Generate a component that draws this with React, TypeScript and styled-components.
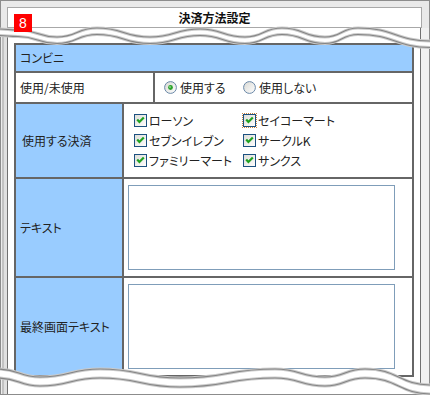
import React, { useId } from 'react'
import styled, { createGlobalStyle } from 'styled-components'

const GlobalStyle = createGlobalStyle`
  html, body {
    margin: 0;
    padding: 0;
    background: #fff;
  }
  body {
    font-family: 'Noto Sans CJK JP', 'Noto Sans', sans-serif;
    font-size: 12px;
    color: #222;
    font-feature-settings: 'palt';
  }
`

const Frame = styled.div`
  position: relative;
  width: 430px;
  height: 395px;
  box-sizing: border-box;
  border: 1px solid #8c8c8c;
  background: #e9e9e9;
  display: flex;
  flex-direction: column;
`

const TitleBar = styled.div`
  margin: 6px 7px 0 6px;
  height: 21px;
  box-sizing: border-box;
  border: 1px solid #a8a8a8;
  background: #fff;
  display: flex;
  align-items: center;
  justify-content: center;
  font-weight: bold;
  line-height: 1;
  color: #111;
`

const Badge = styled.div`
  position: absolute;
  left: 13px;
  top: 13px;
  width: 18px;
  height: 18px;
  background: #ff0000;
  color: #fff;
  font-family: 'Liberation Sans', Arial, sans-serif;
  font-size: 14px;
  line-height: 18px;
  text-align: center;
  z-index: 2;
`

const Body = styled.div`
  flex: 1;
  display: flex;
`

const LeftStrip = styled.div`
  width: 6px;
  background: linear-gradient(
    to right,
    #ececec 0 1px,
    #c2c2c2 1px 3px,
    #e0e0e0 3px 6px
  );
`

const Panel = styled.div`
  width: 414px;
  box-sizing: border-box;
  border-left: 1px solid #707070;
  border-right: 1px solid #707070;
  background: #fff;
  padding: 15px 6px 0;
`

const RightStrip = styled.div`
  flex: 1;
  background: #f0f0f0;
`

const Table = styled.div`
  width: 400px;
  box-sizing: border-box;
  border: 1px solid #666;
`

const Row = styled.div<{ $h: number }>`
  display: flex;
  height: ${(p) => p.$h}px;
`

const Cell = styled.div`
  box-sizing: border-box;
  border: 1px solid #666;
  display: flex;
  align-items: center;
  line-height: 1;
`

const HeadCell = styled(Cell)`
  flex: 1;
  background: #99ccff;
  padding-left: 4px;
`

const LabelCell = styled(Cell)<{ $w: number; $pad?: number; $blue?: boolean }>`
  width: ${(p) => p.$w}px;
  padding-left: ${(p) => p.$pad ?? 4}px;
  background: ${(p) => (p.$blue ? '#99ccff' : '#fff')};
`

const ValueCell = styled(Cell)<{ $pad: number }>`
  flex: 1;
  background: #fff;
  padding-left: ${(p) => p.$pad}px;
`

const Option = styled.label<{ $w?: number }>`
  display: flex;
  align-items: center;
  gap: 3px;
  white-space: nowrap;
  width: ${(p) => (p.$w ? `${p.$w}px` : 'auto')};
`

const CheckGrid = styled.div`
  display: grid;
  grid-template-columns: 109px auto;
  grid-auto-rows: 20px;
`

const CheckItem = styled.label`
  display: flex;
  align-items: center;
  gap: 2px;
  white-space: nowrap;
`

const BoxWrap = styled.span<{ $focus?: boolean }>`
  display: flex;
  outline: ${(p) => (p.$focus ? '1px dotted #c9843f' : 'none')};
`

const TextBox = styled.textarea`
  display: block;
  width: 267px;
  height: 85px;
  box-sizing: border-box;
  border: 1px solid #7f9db9;
  margin: 0;
  padding: 2px;
  resize: none;
  background: #fff;
  font: inherit;
`

const Tear = styled.svg<{ $top: number }>`
  position: absolute;
  left: -1px;
  top: ${(p) => p.$top - 1}px;
  pointer-events: none;
  z-index: 1;
`

const CheckBox = ({ focus }: { focus?: boolean }) => {
  const id = useId()
  return (
    <BoxWrap $focus={focus}>
      <svg width="13" height="13" viewBox="0 0 13 13">
        <defs>
          <linearGradient id={id} x1="0" y1="0" x2="1" y2="1">
            <stop offset="0" stopColor="#dcdcd7" />
            <stop offset="1" stopColor="#fff" />
          </linearGradient>
        </defs>
        <rect x="0.5" y="0.5" width="12" height="12" fill={`url(#${id})`} stroke="#1c5180" />
        <path d="M3.2 5.6 L5.4 8 L9.8 3.4" stroke="#21a121" strokeWidth="2.2" fill="none" />
      </svg>
    </BoxWrap>
  )
}

const Radio = ({ checked }: { checked?: boolean }) => {
  const id = useId()
  return (
    <svg width="13" height="13" viewBox="0 0 13 13">
      <defs>
        <linearGradient id={id} x1="0" y1="0" x2="1" y2="1">
          <stop offset="0" stopColor="#d8d8d3" />
          <stop offset="1" stopColor="#fff" />
        </linearGradient>
      </defs>
      <circle cx="6.5" cy="6.5" r="5.9" fill={`url(#${id})`} stroke="#6a88a8" />
      {checked && <circle cx="6.5" cy="6.5" r="2.4" fill="#2aa22a" />}
      {checked && <circle cx="6" cy="6" r="0.9" fill="#8fd88f" />}
    </svg>
  )
}

// smooth line through the crest / trough points
const curve = (pts: number[][]) =>
  pts.reduce((d, [x, y], i) => {
    if (i === 0) return `M${x} ${y}`
    const [px, py] = pts[i - 1]
    const mx = (px + x) / 2
    return `${d} C${mx} ${py} ${mx} ${y} ${x} ${y}`
  }, '')

const TornEdge = ({ top, height, pts, gap }: { top: number; height: number; pts: number[][]; gap: number }) => {
  const lower = pts.map(([x, y]) => [x, y + gap])
  const band = curve(pts) + ' L' + curve([...lower].reverse()).slice(1) + ' Z'
  return (
    <Tear $top={top} width="430" height={height} viewBox={`0 ${top} 430 ${height}`}>
      <path d={band} fill="#fff" />
      <path d={curve(pts)} stroke="#cacaca" strokeWidth="3" fill="none" />
      <path d={curve(lower)} stroke="#cacaca" strokeWidth="3" fill="none" />
      <path d={curve(pts)} stroke="#858585" strokeWidth="1.2" fill="none" />
      <path d={curve(lower)} stroke="#858585" strokeWidth="1.2" fill="none" />
    </Tear>
  )
}

const topTear = [
  [-2, 29], [18, 30], [57, 37], [97, 28], [150, 37], [200, 29],
  [245, 37], [282, 28], [325, 37], [358, 28], [432, 41],
]

const bottomTear = [
  [-2, 369], [40, 377], [100, 369], [180, 378], [275, 369],
  [325, 377], [365, 369], [432, 385],
]

const stores = ['ローソン', 'セイコーマート', 'セブンイレブン', 'サークルK', 'ファミリーマート', 'サンクス']

export default function App() {
  return (
    <>
      <GlobalStyle />
      <Frame>
        <TitleBar>決済方法設定</TitleBar>
        <Body>
          <LeftStrip />
          <Panel>
            <Table>
              <Row $h={28}>
                <HeadCell>コンビニ</HeadCell>
              </Row>
              <Row $h={31}>
                <LabelCell $w={139}>使用/未使用</LabelCell>
                <ValueCell $pad={9}>
                  <Option $w={79}>
                    <Radio checked />
                    使用する
                  </Option>
                  <Option>
                    <Radio />
                    使用しない
                  </Option>
                </ValueCell>
              </Row>
              <Row $h={75}>
                <LabelCell $w={108} $pad={6} $blue>
                  使用する決済
                </LabelCell>
                <ValueCell $pad={10}>
                  <CheckGrid>
                    {stores.map((s, i) => (
                      <CheckItem key={s}>
                        <CheckBox focus={i === 1} />
                        {s}
                      </CheckItem>
                    ))}
                  </CheckGrid>
                </ValueCell>
              </Row>
              <Row $h={99}>
                <LabelCell $w={108} $blue>
                  テキスト
                </LabelCell>
                <ValueCell $pad={4}>
                  <TextBox />
                </ValueCell>
              </Row>
              <Row $h={99}>
                <LabelCell $w={108} $blue>
                  最終画面テキスト
                </LabelCell>
                <ValueCell $pad={4}>
                  <TextBox />
                </ValueCell>
              </Row>
            </Table>
          </Panel>
          <RightStrip />
        </Body>
        <Badge>8</Badge>
        <TornEdge top={18} height={34} pts={topTear} gap={6.5} />
        <TornEdge top={356} height={39} pts={bottomTear} gap={9} />
      </Frame>
    </>
  )
}
